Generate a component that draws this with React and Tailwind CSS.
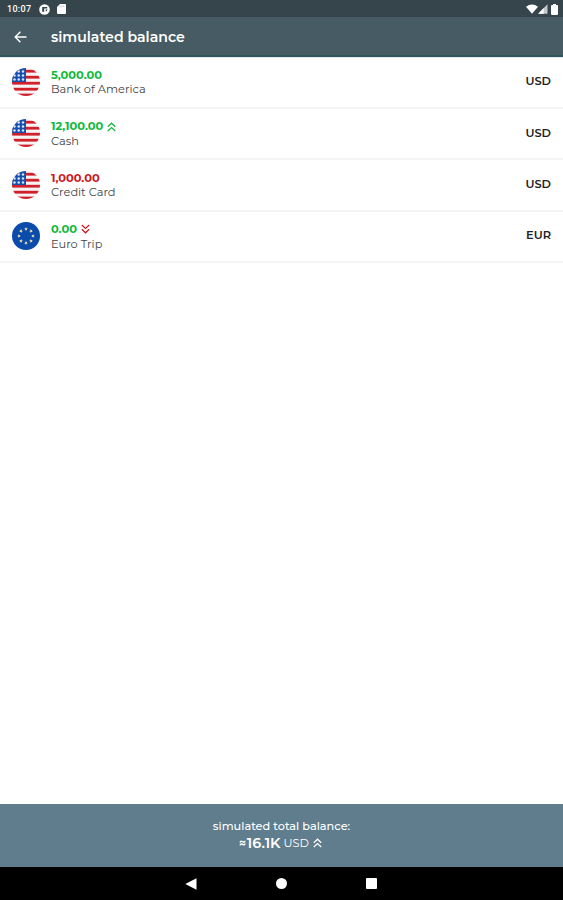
import React from 'react';

function UsFlag() {
  return (
    <svg className="block size-7 shrink-0" viewBox="0 0 28 28">
      <defs>
        <clipPath id="us-disc">
          <circle cx="14" cy="14" r="14" />
        </clipPath>
      </defs>
      <g clipPath="url(#us-disc)">
        <rect width="28" height="28" fill="#f7f3f5" />
        {[1.8, 7.8, 13.8, 19.8, 25.6].map((y) => (
          <rect key={y} y={y} width="28" height="2.8" fill="#d0202a" />
        ))}
        <rect width="14" height="14" fill="#1550ae" />
        {[3.5, 7.5, 11.5].map((y) =>
          [2.5, 6.7, 11].map((x) => <circle key={`${x}-${y}`} cx={x} cy={y} r="1.2" fill="#dce8fb" />)
        )}
      </g>
    </svg>
  );
}

function EuFlag() {
  return (
    <svg className="block size-7 shrink-0" viewBox="0 0 28 28">
      <circle cx="14" cy="14" r="14" fill="#0a4bab" />
      {[0, 45, 90, 135, 180, 225, 270, 315].map((a) => (
        <path
          key={a}
          transform={`rotate(${a} 14 14) translate(14 6.8)`}
          d="M0-1.8.6-.6 1.8-.4.9.5 1.1 1.7 0 1.1-1.1 1.7-.9.5-1.8-.4-.6-.6Z"
          fill="#e0d6a4"
        />
      ))}
    </svg>
  );
}

function Chevrons({ down, className }) {
  return (
    <svg className={`block h-[10px] w-[9px] ${down ? 'rotate-180' : ''} ${className}`} viewBox="0 0 9 10" fill="none" stroke="currentColor" strokeWidth="1.2">
      <path d="M.8 4.7 4.5 1.2 8.2 4.7M.8 9 4.5 5.5 8.2 9" />
    </svg>
  );
}

const accounts = [
  { amount: '5,000.00', name: 'Bank of America', cur: 'USD', color: 'text-[#10b93a]' },
  { amount: '12,100.00', name: 'Cash', cur: 'USD', color: 'text-[#10b93a]', trend: 'up' },
  { amount: '1,000.00', name: 'Credit Card', cur: 'USD', color: 'text-[#cb1822]' },
  { amount: '0.00', name: 'Euro Trip', cur: 'EUR', color: 'text-[#10b93a]', trend: 'down' },
];

function AccountRow({ a }) {
  return (
    <div className="flex h-[51.33px] border-b-2 border-[#f4f4f5] pl-3 pr-3">
      <div className="pt-[10.4px]">{a.cur === 'EUR' ? <EuFlag /> : <UsFlag />}</div>
      <div className="ml-[11px] grow pt-[10.4px]">
        <div className={`flex h-[14px] items-center text-[11.4px] leading-[14px] font-bold ${a.color}`}>
          <span>{a.amount}</span>
          {a.trend && <Chevrons down={a.trend === 'down'} className={`mt-px ml-1 ${a.trend === 'down' ? 'text-[#cb1822]' : ''}`} />}
        </div>
        <div className={`text-[11.4px] leading-[14px] text-[#444] ${a.trend ? 'mt-px' : ''}`}>{a.name}</div>
      </div>
      <div className="pt-[16.6px] text-[11.4px] leading-[14px] font-semibold text-[#222]">{a.cur}</div>
    </div>
  );
}

export default function App() {
  return (
    <div className="flex h-[900px] w-[563px] flex-col overflow-hidden bg-white font-['Montserrat','Inter',sans-serif]">
      <div className="flex h-[17px] shrink-0 items-center bg-[#36444c] pt-px pl-[7px] pr-[5px] text-white">
        <span className="w-[32px] font-['Roboto',sans-serif] text-[9px] leading-none font-medium tracking-[0.3px]">10:07</span>
        <svg className="size-[11px]" viewBox="0 0 11 11">
          <circle cx="5.5" cy="5.5" r="5.3" fill="#fff" />
          <path d="M3.2 3h5v1.5H5.2v3.3H3.2zM6.6 5.6h2.2L7 7.8z" fill="#36444c" />
        </svg>
        <svg className="ml-[7px] h-[10px] w-[9px]" viewBox="0 0 9 10">
          <path d="M3 0h5q1 0 1 1v8q0 1-1 1H1Q0 10 0 9V3Z" fill="#fff" />
          <path d="M3.2 1.5v1.6M5 1.5v1.6M6.8 1.5v1.6" stroke="#a5adb2" strokeWidth=".7" />
        </svg>
        <div className="grow" />
        <svg className="h-[10px] w-[12px]" viewBox="0 0 12 10">
          <path d="M0 2.7Q6-1.8 12 2.7L6 9.7Z" fill="#fff" />
        </svg>
        <svg className="h-[10px] w-[10px]" viewBox="0 0 10 10">
          <path d="M9.5.3v9.4H.2Z" fill="#c3c9cd" />
          <path d="M5.7 4.1v5.6H.2Z" fill="#fff" />
        </svg>
        <svg className="ml-[3px] h-[11px] w-[7px]" viewBox="0 0 7 11">
          <path d="M2 0h3v1h1q1 0 1 1v8q0 1-1 1H1q-1 0-1-1V2q0-1 1-1h1Z" fill="#fff" />
        </svg>
      </div>
      <header className="flex h-[39.6px] shrink-0 items-center border-b-2 border-[#2f565d] bg-[#475b64] pt-[2px] text-white">
        <svg className="ml-[14px] h-[12px] w-[13px]" viewBox="0 0 13 12" fill="none" stroke="#fff" strokeWidth="1.4">
          <path d="M12.5 6H1.4M6.4.8 1.2 6l5.2 5.2" />
        </svg>
        <h1 className="ml-[24px] text-[14.1px] leading-5 font-semibold">simulated balance</h1>
      </header>
      <main className="grow border-t border-[#e4e6ef] bg-white">
        {accounts.map((a) => (
          <AccountRow key={a.name} a={a} />
        ))}
      </main>
      <footer className="flex h-[63px] shrink-0 flex-col items-center bg-[#607d8d] pt-[15px] text-white">
        <div className="text-[11.3px] leading-[14px] font-medium">simulated total balance:</div>
        <div className="mt-px flex items-center pr-0.5 leading-[18px]">
          <span className="mr-px text-[11.4px] font-bold">≈</span>
          <span className="text-[14.3px] font-semibold">16.1K</span>
          <span className="ml-[3px] text-[11.4px]">USD</span>
          <Chevrons className="ml-1" />
        </div>
      </footer>
      <nav className="flex h-[33px] shrink-0 items-center justify-center bg-black pr-px">
        <svg className="h-[12px] w-[12px]" viewBox="0 0 12 12">
          <path d="M.3 6 11.5.2v11.6Z" fill="#fff" />
        </svg>
        <div className="mx-[79px] size-[11px] rounded-full bg-white" />
        <div className="size-[11px] rounded-[1px] bg-white" />
      </nav>
    </div>
  );
}
